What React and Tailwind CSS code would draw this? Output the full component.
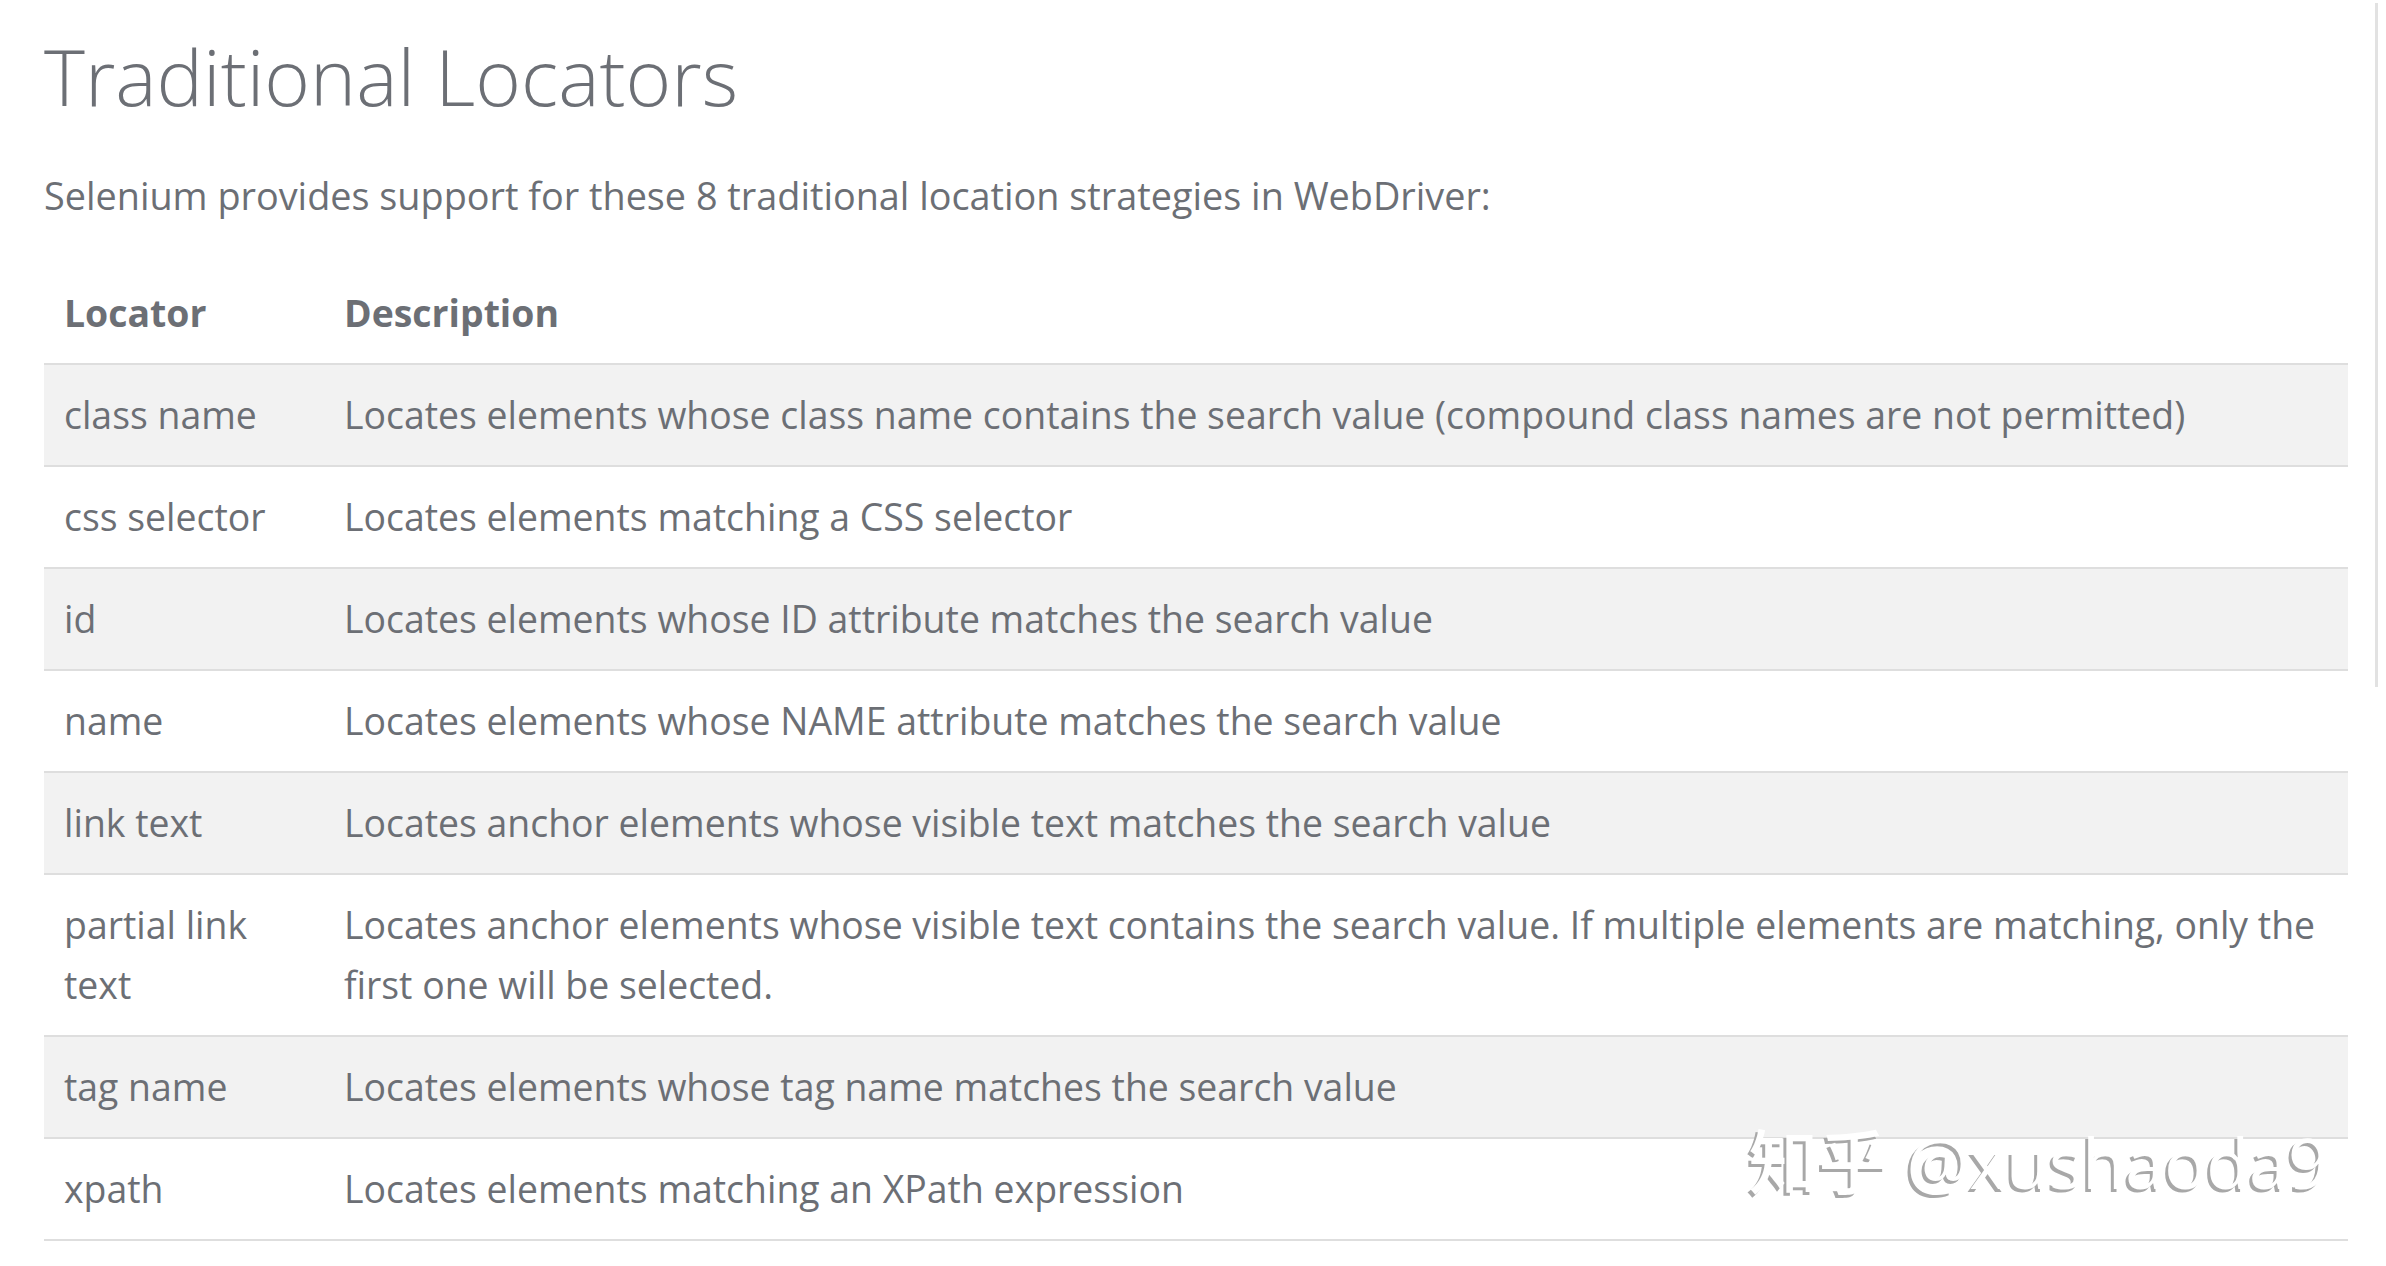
import React from "react";

const rows = [
  { loc: "class name", desc: "Locates elements whose class name contains the search value (compound class names are not permitted)" },
  { loc: "css selector", desc: "Locates elements matching a CSS selector" },
  { loc: "id", desc: "Locates elements whose ID attribute matches the search value" },
  { loc: "name", desc: "Locates elements whose NAME attribute matches the search value" },
  { loc: "link text", desc: "Locates anchor elements whose visible text matches the search value" },
  { loc: "partial link text", desc: "Locates anchor elements whose visible text contains the search value. If multiple elements are matching, only the first one will be selected." },
  { loc: "tag name", desc: "Locates elements whose tag name matches the search value" },
  { loc: "xpath", desc: "Locates elements matching an XPath expression" },
];

const App = () => {
  return (
    <div className="relative w-[2386px] h-[1266px] bg-white overflow-hidden text-[#6c6f75] font-['Open_Sans',sans-serif]">
      <div className="absolute right-[8px] top-[3px] w-[3px] h-[684px] bg-[#e2e2e2]"></div>
      <div className="pl-[44px] pr-[38px] pt-[26px]">
        <h2 className="text-[78px] leading-[100px] font-light">Traditional Locators</h2>
        <p className="mt-[40px] text-[37.8px] leading-[60px]">
          Selenium provides support for these 8 traditional location strategies in WebDriver:
        </p>
        <table className="mt-[37px] w-full border-collapse table-fixed text-[37.4px] leading-[60px]">
          <thead>
            <tr className="border-b-2 border-[#dedede]">
              <th className="w-[280px] px-[20px] py-[20px] text-left font-bold">Locator</th>
              <th className="px-[20px] py-[20px] text-left font-bold">Description</th>
            </tr>
          </thead>
          <tbody>
            {rows.map((row, i) => (
              <tr key={i} className={i % 2 === 0 ? "bg-[#f2f2f2] border-b-2 border-[#dedede]" : "bg-white border-b-2 border-[#dedede]"}>
                <td className="px-[20px] py-[20px] align-top">{row.loc}</td>
                <td className="px-[20px] py-[20px] align-top">{row.desc}</td>
              </tr>
            ))}
          </tbody>
        </table>
      </div>
      <div className="absolute right-[58px] top-[1120px] text-[70px] leading-[84px] font-medium text-white font-['Open_Sans','Noto_Sans_CJK_SC',sans-serif] [text-shadow:-3px_3px_0_#a8a8a8]">
        知乎 @xushaoda9
      </div>
    </div>
  );
};

export default App;
